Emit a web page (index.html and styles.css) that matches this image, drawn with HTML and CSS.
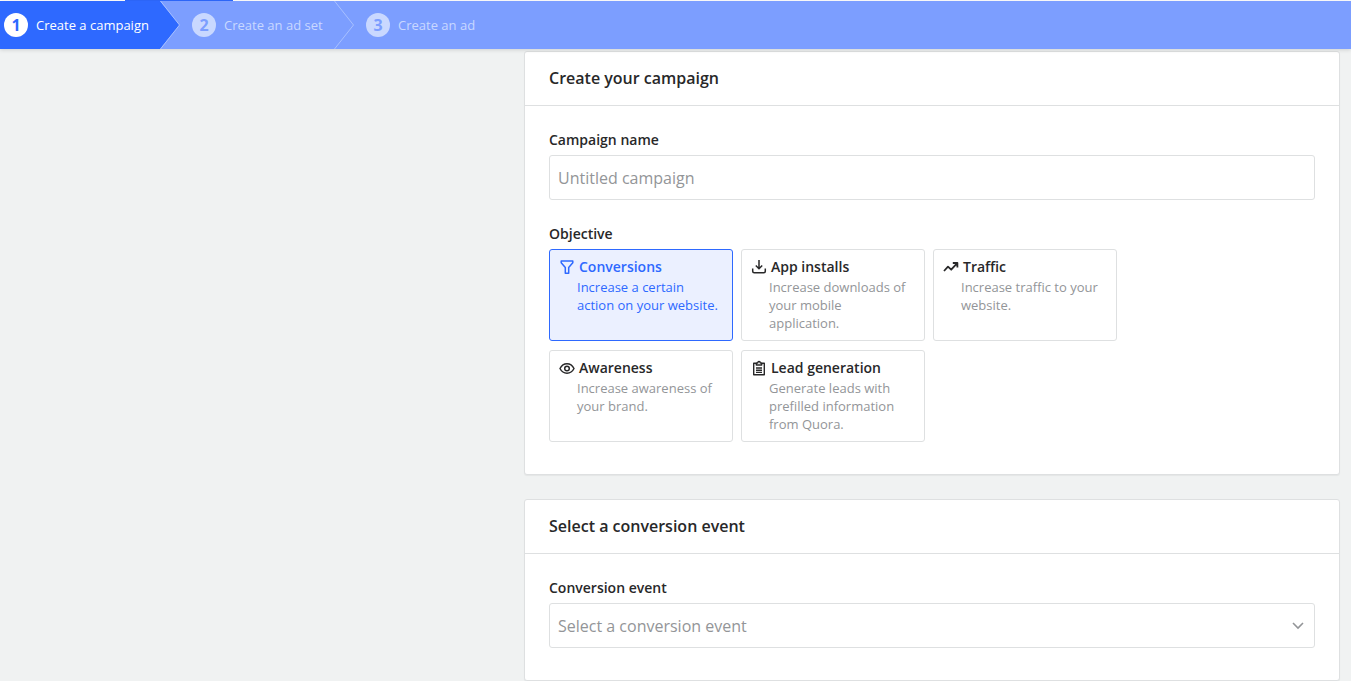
FILE: index.html
```html
<!DOCTYPE html>
<html lang="en">
<head>
<meta charset="utf-8">
<meta name="viewport" content="width=device-width, initial-scale=1">
<title>Create a campaign</title>
<link rel="stylesheet" href="styles.css">
</head>
<body>
<div class="loader"><div class="loader-bar"></div></div>
<nav class="steps" aria-label="Progress">
  <a class="step step-active" href="#campaign" aria-current="step"><span class="step-number">1</span><span class="step-text">Create a campaign</span></a>
  <svg class="step-arrow" viewBox="0 0 20 48" aria-hidden="true"><path d="M0 0L19.500 24L0 48Z" fill="#2e69ff"/><path d="M.5 0L19.500 24L.5 48" fill="none" stroke="#a8c0ff"/></svg>
  <a class="step" href="#adset"><span class="step-number">2</span><span class="step-text">Create an ad set</span></a>
  <svg class="step-arrow" viewBox="0 0 20 48" aria-hidden="true"><path d="M.5 0L19.500 24L.5 48" fill="none" stroke="#a8c0ff"/></svg>
  <a class="step" href="#ad"><span class="step-number">3</span><span class="step-text">Create an ad</span></a>
</nav>
<main class="content">
  <section class="card" id="campaign">
    <h2 class="card-title">Create your campaign</h2>
    <div class="card-body">
      <div class="field">
        <label class="label" for="name">Campaign name</label>
        <input class="control" id="name" type="text" placeholder="Untitled campaign">
      </div>
      <fieldset class="field">
        <legend class="label">Objective</legend>
        <div class="options">
          <label class="option">
            <input class="option-radio" type="radio" name="objective" checked>
            <span class="option-title"><svg class="icon" viewBox="0 0 16 16"><path d="M2.200 2h11.600v1.800L9.700 8.600v5.600H6.300V8.600L2.200 3.800Z"/></svg>Conversions</span>
            <span class="option-text">Increase a certain action on your website.</span>
          </label>
          <label class="option">
            <input class="option-radio" type="radio" name="objective">
            <span class="option-title"><svg class="icon" viewBox="0 0 16 16"><path d="M8 1v8.500M4.800 6.500L8 9.700l3.200-3.200M1.700 9.500v2.700q0 1.500 1.500 1.500h9.600q1.500 0 1.500-1.500V9.500"/></svg>App installs</span>
            <span class="option-text">Increase downloads of your mobile application.</span>
          </label>
          <label class="option">
            <input class="option-radio" type="radio" name="objective">
            <span class="option-title"><svg class="icon" viewBox="0 0 16 16"><path d="M1 12l4-4.300 3.200 3L14 4.300M9.800 4h4.600v4.600" stroke-width="1.800"/></svg>Traffic</span>
            <span class="option-text">Increase traffic to your website.</span>
          </label>
          <label class="option">
            <input class="option-radio" type="radio" name="objective">
            <span class="option-title"><svg class="icon" viewBox="0 0 16 16"><path d="M1 8.500C4.200 2.200 11.800 2.200 15 8.500C11.800 14.800 4.200 14.800 1 8.500Z"/><circle cx="8" cy="8.500" r="2.300"/></svg>Awareness</span>
            <span class="option-text">Increase awareness of your brand.</span>
          </label>
          <label class="option">
            <input class="option-radio" type="radio" name="objective">
            <span class="option-title"><svg class="icon" viewBox="0 0 16 16"><path d="M5 3.200H2.700v11.600h10.600V3.200H11M5.300 5V3h1.400q0-1.500 1.300-1.500T9.300 3h1.400v2ZM5 8h6M5 10.200h6M5 12.400h6" stroke-width="1.400"/></svg>Lead generation</span>
            <span class="option-text">Generate leads with prefilled information from Quora.</span>
          </label>
        </div>
      </fieldset>
    </div>
  </section>
  <section class="card">
    <h2 class="card-title">Select a conversion event</h2>
    <div class="card-body">
      <div class="field">
        <label class="label" for="event">Conversion event</label>
        <div class="select">
          <select class="control" id="event"><option>Select a conversion event</option></select>
          <svg class="chevron" viewBox="0 0 12 8" aria-hidden="true"><path d="M1 1l5 5 5-5"/></svg>
        </div>
      </div>
    </div>
  </section>
</main>
</body>
</html>
```
FILE: styles.css
```css
* { box-sizing: border-box; }
body {
  margin: 0;
  background: #f0f2f2;
  color: #282829;
  font: 14px/18px "Segoe UI", "Open Sans", "Noto Sans", sans-serif;
}
.loader { height: 1px; padding-left: 125px; background: #fff; }
.loader-bar { width: 108px; height: 1px; background: #2e69ff; }
.steps {
  position: relative;
  display: flex;
  height: 48px;
  background: #7c9eff;
  box-shadow: 0 1px 4px rgba(0, 0, 0, .14);
}
.step {
  display: flex;
  align-items: center;
  gap: 8px;
  width: 154px;
  padding-left: 12px;
  color: #c9d8ff;
  font-size: 13px;
  text-decoration: none;
  white-space: nowrap;
}
.step-active { width: 160px; padding-left: 4px; background: #2e69ff; color: #fff; }
.step-number {
  display: flex;
  align-items: center;
  justify-content: center;
  width: 24px;
  height: 24px;
  border-radius: 50%;
  background: #c9d8ff;
  color: #7c9eff;
  font-size: 16px;
  font-weight: 700;
}
.step-active .step-number { background: #fff; color: #2e69ff; }
.step-arrow { width: 20px; height: 48px; }
.content {
  display: flex;
  flex-direction: column;
  gap: 24px;
  margin: 2px 11px 0 524px;
}
.card {
  border: 1px solid #dee0e1;
  border-radius: 3px;
  background: #fff;
  box-shadow: 0 1px 1px rgba(0, 0, 0, .05);
}
.card-title {
  margin: 0;
  padding: 16px 24px 17px;
  border-bottom: 1px solid #dee0e1;
  font-size: 16px;
  line-height: 20px;
  font-weight: 600;
}
.card-body {
  display: flex;
  flex-direction: column;
  gap: 25px;
  padding: 25px 24px 32px;
}
.field { min-width: 0; margin: 0; padding: 0; border: 0; }
.label { display: block; margin-bottom: 6px; padding: 0; font-weight: 600; }
.control {
  display: block;
  width: 100%;
  height: 45px;
  margin: 0;
  padding: 0 8px;
  border: 1px solid #dee0e1;
  border-radius: 3px;
  background: #fff;
  color: #939598;
  font: inherit;
  font-size: 16px;
  appearance: none;
}
.control::placeholder { color: #939598; opacity: 1; }
.select { position: relative; }
.chevron {
  position: absolute;
  top: 19px;
  right: 11px;
  width: 12px;
  height: 8px;
  fill: none;
  stroke: #939598;
  stroke-width: 1.6;
  pointer-events: none;
}
.options { display: grid; grid-template-columns: repeat(3, 184px); gap: 9px 8px; }
.option {
  position: relative;
  min-height: 92px;
  padding: 7px 11px 8px 9px;
  border: 1px solid #dee0e1;
  border-radius: 3px;
  cursor: pointer;
}
.option-radio { position: absolute; opacity: 0; margin: 0; }
.option-title {
  display: flex;
  align-items: center;
  gap: 4px;
  line-height: 20px;
  font-weight: 600;
}
.icon {
  width: 16px;
  height: 16px;
  fill: none;
  stroke: currentColor;
  stroke-width: 1.5;
  stroke-linejoin: round;
}
.option-text {
  display: block;
  margin-top: 1px;
  padding-left: 18px;
  color: #939598;
  font-size: 13px;
}
.option:has(:checked) { border-color: #2e69ff; background: #ebf0ff; color: #2e69ff; }
.option:has(:checked) .option-text { color: #2e69ff; }
```
